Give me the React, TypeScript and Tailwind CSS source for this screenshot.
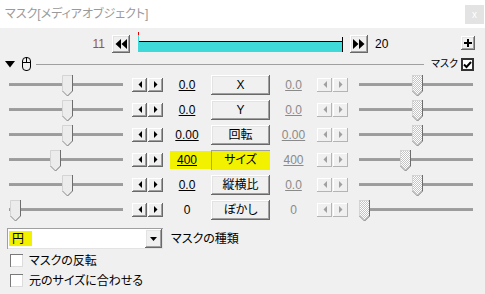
import React from 'react';

const rows = [
  { label: 'X', v: '0.0', l: 'left-[53px]', r: 'left-[53px]', hl: false, plain: false },
  { label: 'Y', v: '0.0', l: 'left-[53px]', r: 'left-[53px]', hl: false, plain: false },
  { label: '回転', v: '0.00', l: 'left-[53px]', r: 'left-[53px]', hl: false, plain: false },
  { label: 'サイズ', v: '400', l: 'left-[41px]', r: 'left-[41px]', hl: true, plain: false },
  { label: '縦横比', v: '0.0', l: 'left-[53px]', r: 'left-[53px]', hl: false, plain: false },
  { label: 'ぼかし', v: '0', l: 'left-[1px]', r: 'left-0', hl: false, plain: true },
];

const bevel = 'shadow-[inset_-1px_-1px_0_#696969,inset_1px_1px_0_#ffffff,inset_-2px_-2px_0_#a0a0a0,inset_2px_2px_0_#e3e3e3]';

function Thumb({ off }: { off?: boolean }) {
  return (
    <svg width="11" height="21" viewBox="0 0 11 21" className="block">
      <defs>
        <pattern id="dither" width="2" height="2" patternUnits="userSpaceOnUse">
          <rect width="2" height="2" fill="#ffffff" />
          <rect width="1" height="1" fill="#c4c4c4" />
          <rect x="1" y="1" width="1" height="1" fill="#c4c4c4" />
        </pattern>
      </defs>
      <path d="M0 0H11V16L5.5 21L0 16Z" fill={off ? 'url(#dither)' : '#ececec'} />
      <path d="M0.5 16V0.5H10" stroke="#d4d4d4" fill="none" />
      <path d="M10.5 0V16L5.5 21" stroke="#6d6d6d" fill="none" />
      <path d="M0.5 16L5.5 21" stroke="#8a8a8a" fill="none" />
    </svg>
  );
}

function Slider({ pos, off }: { pos: string; off?: boolean }) {
  return (
    <div className="relative w-[114px] h-[21px] flex items-center">
      <div className="w-full h-[3px] border-t border-[#a0a0a0] bg-[#9c9c9c] border-b-white" />
      <div className={`absolute top-[1px] ${pos}`}>
        <Thumb off={off} />
      </div>
    </div>
  );
}

function Arrow({ dir, off }: { dir: 'l' | 'r'; off?: boolean }) {
  return (
    <div className={`w-[15px] h-[14px] bg-[#f0f0f0] flex items-center justify-center ${off ? 'shadow-[inset_-1px_-1px_0_#b4b4b4,inset_1px_1px_0_#ffffff]' : 'shadow-[inset_-1px_-1px_0_#696969,inset_1px_1px_0_#ffffff,inset_-2px_-2px_0_#a0a0a0]'}`}>
      <svg width="4" height="7" viewBox="0 0 4 7">
        <path d={dir === 'l' ? 'M4 0V7L0.5 3.5Z' : 'M0 0V7L3.5 3.5Z'} fill={off ? '#a0a0a0' : '#000000'} />
      </svg>
    </div>
  );
}

function Spin({ off }: { off?: boolean }) {
  return (
    <div className="flex gap-px shrink-0">
      <Arrow dir="l" off={off} />
      <Arrow dir="r" off={off} />
    </div>
  );
}

function Box({ checked }: { checked?: boolean }) {
  return (
    <div className={`w-[13px] h-[13px] shrink-0 bg-white flex items-center justify-center ${checked ? 'border-2 border-[#333333]' : 'shadow-[inset_1px_1px_0_#7a7a7a,inset_-1px_-1px_0_#dcdcdc]'}`}>
      {checked && (
        <svg width="9" height="9" viewBox="0 0 9 9">
          <path d="M1 4.5L3.5 7L8 2" stroke="#000" strokeWidth="2" fill="none" />
        </svg>
      )}
    </div>
  );
}

export default function App() {
  return (
    <div className="w-[485px] h-[294px] bg-[#f0f0f0] overflow-hidden font-['Liberation_Sans','Noto_Sans_CJK_JP',sans-serif] text-[12px] leading-none text-black whitespace-nowrap [font-feature-settings:'palt']">
      <div className="h-[28px] bg-white flex justify-between pl-[5px] pr-px">
        <span className="self-center text-[#9a9a9a] text-[12px]">マスク[メディアオブジェクト]</span>
        <div className="mt-[5px] w-[19px] h-[19px] bg-[#e3e3e3] flex items-center justify-center text-white text-[10px]">x</div>
      </div>

      <div className="mt-[4px] h-[21px] flex items-end">
        <div className="w-[105px] h-[18px] flex items-center justify-end text-[#9a5a16]">11</div>
        <div className={`ml-[7px] w-[18px] h-[18px] bg-[#f0f0f0] flex items-center justify-center ${bevel}`}>
          <svg width="12" height="10" viewBox="0 0 12 10">
            <path d="M6 0V10L0.5 5Z M12 0V10L6.5 5Z" fill="#000" />
          </svg>
        </div>
        <svg width="205" height="21" viewBox="0 0 205 21" className="ml-[8px] block">
          <rect x="0" y="10" width="205" height="10" fill="#3fd9d9" />
          <rect x="0" y="3" width="1" height="7" fill="#3fd9d9" />
          <rect x="0" y="0" width="1" height="3" fill="#e00000" />
          <rect x="1" y="9" width="204" height="1" fill="#000" />
          <rect x="204" y="5" width="1" height="15" fill="#000" />
        </svg>
        <div className={`ml-[7px] w-[18px] h-[18px] bg-[#f0f0f0] flex items-center justify-center ${bevel}`}>
          <svg width="12" height="10" viewBox="0 0 12 10">
            <path d="M0 0V10L5.5 5Z M6 0V10L11.5 5Z" fill="#000" />
          </svg>
        </div>
        <div className="ml-[7px] h-[18px] flex items-center">20</div>
        <div className={`ml-auto mr-[10px] mb-[3px] w-[14px] h-[14px] bg-[#f0f0f0] flex items-center justify-center ${bevel}`}>
          <svg width="8" height="8" viewBox="0 0 8 8">
            <path d="M3 0H5V3H8V5H5V8H3V5H0V3H3Z" fill="#000" />
          </svg>
        </div>
      </div>

      <div className="mt-[4px] h-[14px] flex items-center">
        <svg width="10" height="7" viewBox="0 0 10 7" className="ml-[5px] shrink-0">
          <path d="M0 0H10L5 6.5Z" fill="#000" />
        </svg>
        <svg width="9" height="14" viewBox="0 0 9 14" className="ml-[7px] shrink-0">
          <rect x="0.5" y="0.5" width="8" height="13" rx="3.5" stroke="#000" fill="none" />
          <path d="M0.5 5.5H8.5M4.5 0.5V5.5" stroke="#000" />
        </svg>
        <div className="ml-[5px] w-[388px] h-px bg-[#a0a0a0] shrink-0" />
        <span className="ml-[7px] text-[10px] shrink-0">マスク</span>
        <div className="ml-auto mr-[11px]">
          <Box checked />
        </div>
      </div>

      <div className="mt-[1px] flex flex-col">
        {rows.map((r) => (
          <div key={r.label} className="h-[25px] flex items-center">
            <div className="ml-[9px] shrink-0">
              <Slider pos={r.l} />
            </div>
            <div className="ml-[9px]">
              <Spin />
            </div>
            {r.hl ? (
              <div className="w-[48px] flex justify-end shrink-0">
                <div className="w-[41px] h-[18px] bg-[#f2f200] flex items-center justify-center pr-[7px] underline">{r.v}</div>
              </div>
            ) : (
              <div className={`w-[48px] shrink-0 text-center ${r.plain ? '' : 'underline'}`}>{r.v}</div>
            )}
            <div className={`w-[59px] h-[20px] shrink-0 flex items-center justify-center ${r.hl ? 'bg-[#f2f200] shadow-[inset_1px_1px_0_#a0a0a0]' : `bg-[#f0f0f0] ${bevel}`}`}>
              {r.label}
            </div>
            <div className={`w-[47px] shrink-0 text-center text-[#8a8a8a] ${r.plain ? '' : 'underline'}`}>{r.v}</div>
            <Spin off />
            <div className="ml-[11px] shrink-0">
              <Slider pos={r.r} off />
            </div>
          </div>
        ))}
      </div>

      <div className="mt-[6px] h-[21px] flex items-center">
        <div className="ml-[7px] w-[156px] h-[21px] bg-white flex items-center shadow-[inset_1px_1px_0_#a0a0a0,inset_-1px_-1px_0_#e3e3e3]">
          <div className="ml-[2px] w-[23px] h-[15px] bg-[#f2f200] flex items-center pl-[3px]">円</div>
          <div className={`ml-auto mr-px w-[17px] h-[19px] bg-[#f0f0f0] flex items-center justify-center ${bevel}`}>
            <svg width="7" height="4" viewBox="0 0 7 4">
              <path d="M0 0H7L3.5 4Z" fill="#000" />
            </svg>
          </div>
        </div>
        <span className="ml-[8px]">マスクの種類</span>
      </div>

      <div className="mt-[5px] ml-[10px] flex flex-col gap-[7px]">
        <div className="flex items-center">
          <Box />
          <span className="ml-[6px]">マスクの反転</span>
        </div>
        <div className="flex items-center">
          <Box />
          <span className="ml-[6px]">元のサイズに合わせる</span>
        </div>
      </div>
    </div>
  );
}
